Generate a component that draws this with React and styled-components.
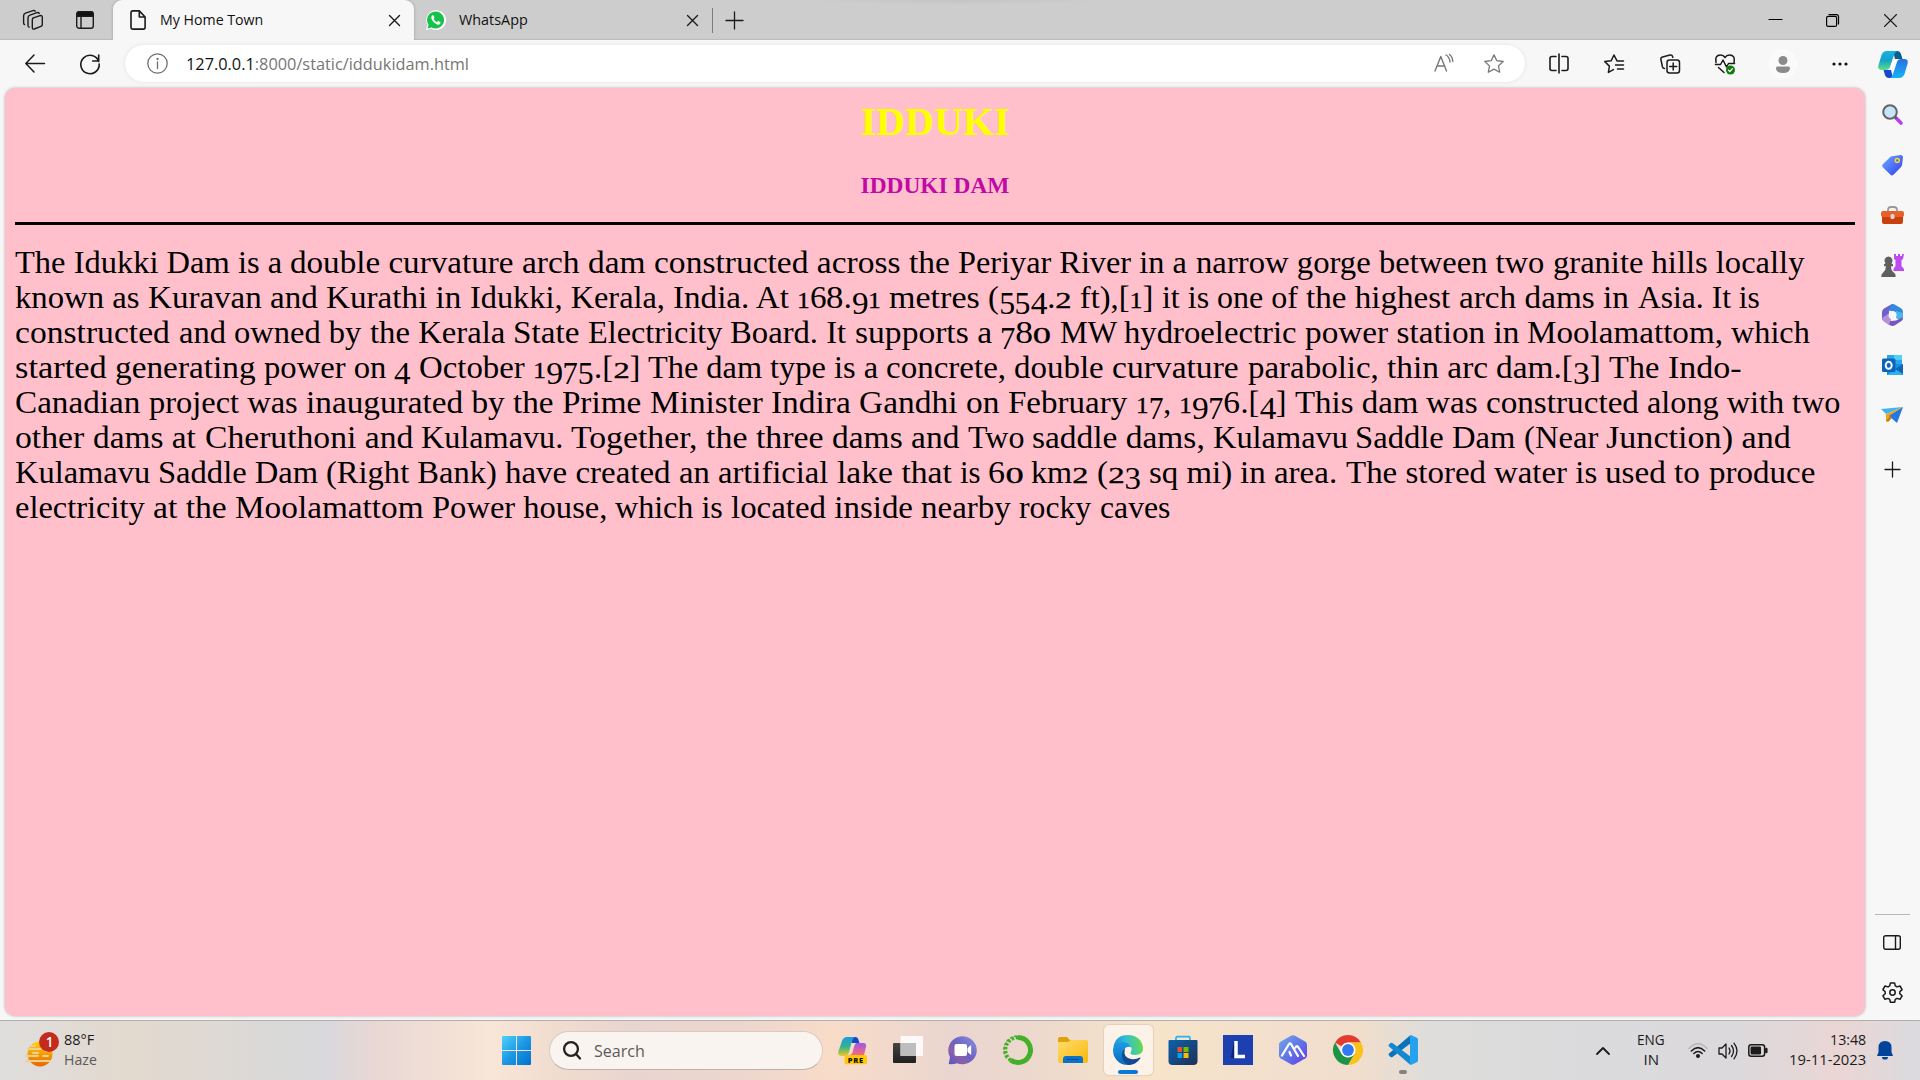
import React, { useLayoutEffect, useRef, useState } from 'react';
import styled, { createGlobalStyle, css } from 'styled-components';

const Global = createGlobalStyle`
  html, body { margin: 0; padding: 0; overflow: hidden; background: #f7f7f7; }
  * { box-sizing: border-box; }
  svg { display: block; flex: none; overflow: visible; }
`;

const ui = `"Open Sans", "Noto Sans", sans-serif`;
const serif = `"Liberation Serif", serif`;

/* ---------- text that spans an exact width ---------- */
const FitBox = styled.span`
  display: inline-block;
  flex: none;
  width: ${(p) => p.$w}px;
  white-space: pre;
`;
const FitInner = styled.span`
  display: inline-block;
  transform-origin: 0 50%;
`;
function Fit({ w, children }) {
  const ref = useRef(null);
  const [k, setK] = useState(1);
  useLayoutEffect(() => {
    setK(w / ref.current.offsetWidth);
  }, [w]);
  return (
    <FitBox $w={w}>
      <FitInner ref={ref} style={{ transform: `scaleX(${k})` }}>{children}</FitInner>
    </FitBox>
  );
}

/* ---------- window frame ---------- */
const Screen = styled.div`
  width: 1920px;
  height: 1080px;
  display: flex;
  flex-direction: column;
  overflow: hidden;
  background: #f7f7f7;
  font-family: ${ui};
  color: #111;
`;
const TabStrip = styled.div`
  height: 40px;
  flex: none;
  display: flex;
  background: radial-gradient(ellipse 150px 5px at 958px 0, #c4c4c4, #cdcdcd 100%);
  box-shadow: inset 0 -1px 0 #bcbcbc;
`;
const Slot = styled.div`
  width: ${(p) => p.$w}px;
  height: 100%;
  flex: none;
  display: flex;
  align-items: center;
  justify-content: center;
`;
const Tab = styled.div`
  height: 40px;
  display: flex;
  align-items: center;
  font-size: 15px;
  line-height: 20px;
  ${(p) => p.$active ? css`
    width: 301px;
    padding: 0 14px 0 17px;
    background: #f7f7f7;
    border-radius: 9px 9px 0 0;
    box-shadow: 0 0 3px rgba(0, 0, 0, .25);
    clip-path: inset(0 -4px 0 -4px);
  ` : css`
    width: 298px;
    padding: 0 14px 0 12px;
  `}
`;
const TabTitle = styled.div`
  flex: 1;
  padding: 0 0 3px ${(p) => p.$pad}px;
`;
const Divider = styled.div`
  width: 1px;
  height: 25px;
  margin-top: 8px;
  background: #7c7c7c;
`;
const Spacer = styled.div`flex: 1;`;
const Toolbar = styled.div`
  height: 48px;
  flex: none;
  display: flex;
  align-items: center;
  padding-left: 8px;
`;
const AddressBar = styled.div`
  width: 1400px;
  height: 37px;
  flex: none;
  margin: 0 6px 1px 8px;
  padding: 0 21px 0 22px;
  display: flex;
  align-items: center;
  border-radius: 19px;
  background: #fff;
  box-shadow: 0 0 4px rgba(0, 0, 0, .09);
`;
const Url = styled.div`
  display: flex;
  flex: 1;
  padding-left: 18px;
  font-size: 17px;
  line-height: 24px;
  color: #767676;
`;
const Host = styled.span`color: #111;`;
const Avatar = styled.div`
  width: 28px;
  height: 28px;
  border-radius: 50%;
  background: #fafafa;
  border: 1px solid #fff;
  display: flex;
  align-items: center;
  justify-content: center;
`;
const Middle = styled.div`
  height: 932px;
  flex: none;
  display: flex;
  padding-left: 5px;
`;

/* ---------- page ---------- */
const Page = styled.main`
  width: 1860px;
  height: 928px;
  flex: none;
  padding: 11px 10px 10px;
  border-radius: 10px;
  background: #ffc0cb;
  box-shadow: 0 0 3px rgba(0, 0, 0, .3);
  font-family: ${serif};
`;
const Title = styled.h1`
  margin: 0 0 27px;
  font-size: 40px;
  line-height: 46px;
  text-align: center;
  color: #ff0;
`;
const Subtitle = styled.h3`
  margin: 0 0 23px;
  font-size: 23.4px;
  line-height: 27px;
  text-align: center;
  color: #c109a5;
`;
const Rule = styled.hr`
  margin: 0;
  border: 0;
  height: 3px;
  background: #000;
`;
const Article = styled.div`
  margin-top: 20px;
  font-size: 32px;
  line-height: 35px;
  color: #000;
`;
const Line = styled.div`
  height: 35px;
  display: flex;
`;
const Digit = styled.span`
  display: inline-block;
  line-height: 1;
  height: 1em;
  width: ${(p) => p.$natural}px;
  margin-right: ${(p) => p.$w - p.$natural}px;
  transform: scaleX(${(p) => p.$w / p.$natural});
  transform-origin: 0 100%;
  ${(p) => p.$small && css`font-size: 22.5px; -webkit-text-stroke: .3px #000;`}
  ${(p) => p.$low && css`position: relative; top: 6px;`}
`;

const digitWidth = { 0: 17.8, 1: 12.8, 2: 16, 3: 16, 4: 16.4, 5: 15.6, 6: 16.6, 7: 15, 8: 17.4, 9: 16.6 };
const oldStyle = (text) =>
  text.split(/(\d)/).map((t, i) => {
    if (!/^\d$/.test(t)) return t;
    const small = '012'.includes(t);
    return <Digit key={i} $w={digitWidth[t]} $natural={small ? 11.25 : 16} $small={small} $low={'34579'.includes(t)}>{t}</Digit>;
  });

/* each line: right edge, then phrases with the x at which they begin */
const lines = [
  [1804, [15, 'The Idukki Dam is a '], [290.2, 'double curvature '], [522, 'arch dam '], [653.8, 'constructed across the '], [958.5, 'Periyar River in a '], [1195.7, 'narrow gorge '], [1378.7, 'between two '], [1552.6, 'granite hills locally']],
  [1760, [15, 'known as '], [148, 'Kuravan and '], [325.7, 'Kurathi in '], [469.6, 'Idukki, Kerala, '], [672.8, 'India. At '], [797, '168.91 '], [889, 'metres '], [988, '(554.2 ft),[1] '], [1162, 'it is one of '], [1306, 'the highest '], [1459, 'arch dams in '], [1637.7, 'Asia. It is']],
  [1810, [15, 'constructed '], [178.8, 'and owned by '], [369.8, 'the Kerala '], [513, 'State '], [587.7, 'Electricity '], [730, 'Board. It '], [854.6, 'supports a '], [1000.4, '780 '], [1059.8, 'MW '], [1124, 'hydroelectric '], [1305, 'power station in '], [1527.5, 'Moolamattom, '], [1731.4, 'which']],
  [1741, [15, 'started '], [115, 'generating '], [263.9, 'power on '], [394.5, '4 '], [418.7, 'October '], [532.6, '1975.[2] '], [647.7, 'The dam '], [770, 'type is a '], [886.5, 'concrete, '], [1014.5, 'double '], [1112.4, 'curvature '], [1247.7, 'parabolic, '], [1386.7, 'thin arc '], [1496.3, 'dam.[3] '], [1609, 'The '], [1667.7, 'Indo-']],
  [1841, [15, 'Canadian '], [148.8, 'project was '], [306, 'inaugurated by '], [513, 'the Prime '], [650, 'Minister '], [770.8, 'Indira Gandhi '], [966, 'on '], [1007.8, 'February '], [1135.7, '17, '], [1179, '1976.[4] '], [1294.9, 'This dam '], [1426.5, 'was constructed '], [1647.5, 'along with two']],
  [1791, [15, 'other '], [93, 'dams at '], [204.5, 'Cheruthoni and '], [421, 'Kulamavu. '], [571, 'Together, '], [705.9, 'the three '], [832, 'dams and '], [968, 'Two '], [1032, 'saddle dams, '], [1212.8, 'Kulamavu '], [1355.5, 'Saddle Dam '], [1523.8, '(Near '], [1606.5, 'Junction) and']],
  [1815, [15, 'Kulamavu '], [158, 'Saddle Dam '], [326, '(Right Bank) '], [505, 'have created '], [679, 'an artificial '], [837, 'lake that '], [960, 'is '], [988, '60 '], [1031, 'km2 '], [1096.5, '(23 '], [1149, 'sq mi) '], [1240.4, 'in area. '], [1345.7, 'The stored '], [1494, 'water is '], [1605, 'used to '], [1708.7, 'produce']],
  [1170, [15, 'electricity '], [153, 'at the '], [235, 'Moolamattom '], [431.6, 'Power house, '], [614.7, 'which is '], [731, 'located inside '], [921.4, 'nearby '], [1019.4, 'rocky '], [1099.6, 'caves']],
];

/* ---------- side bar ---------- */
const Sidebar = styled.aside`
  width: 55px;
  display: flex;
  flex-direction: column;
  align-items: center;
  padding: 0 1px 3px 0;
`;
const SideItem = styled.div`
  width: 54px;
  height: ${(p) => p.$h || 50}px;
  flex: none;
  display: flex;
  align-items: center;
  justify-content: center;
`;
const SideRule = styled.div`
  width: 35px;
  height: 1px;
  background: #b8b8b8;
  margin-bottom: 2px;
`;

/* ---------- task bar ---------- */
const Taskbar = styled.footer`
  height: 60px;
  flex: none;
  display: flex;
  align-items: stretch;
  border-top: 1px solid #b3aeae;
  background: linear-gradient(90deg, #dfdedd 0, #e3d9ce 130px, #d9d9d9 290px, #d9d8dc 325px, #e9d7d5 375px,
    #f8e6d7 490px, #f0dccf 560px, #e9d5d0 630px, #ecd6ce 740px, #f8dcc8 830px, #ead6d0 950px, #ecd8cd 1030px,
    #f7e4ca 1150px, #f2dfcd 1280px, #f1decc 1360px, #dedddb 1430px, #dadadd 1600px, #dcd9dc 1740px, #ead6d4 1840px, #dcdade 1915px);
`;
const Weather = styled.div`
  width: 489px;
  display: flex;
  align-items: center;
  padding: 0 0 1px 23px;
`;
const Stack = styled.div`
  width: ${(p) => p.$w}px;
  display: flex;
  flex-direction: column;
  align-items: ${(p) => p.$align};
  justify-content: center;
  margin-left: ${(p) => p.$ml || 0}px;
  padding-bottom: 3px;
  font-size: 15px;
  line-height: 20px;
  color: #1b1b1b;
`;
const Dim = styled.span`color: #5a5a5a;`;
const SearchBox = styled.div`
  width: 274px;
  height: 39px;
  flex: none;
  margin: 10px 3px 0 5px;
  padding: 0 13px 1px;
  display: flex;
  align-items: center;
  gap: 13px;
  border-radius: 20px;
  background: #faf4f1;
  border: 1px solid #dcc9c3;
  border-bottom-color: #c0b0ac;
  font-size: 17px;
  color: #5c5a5a;
`;
const AppSlot = styled.div`
  width: 54.95px;
  height: 100%;
  flex: none;
  display: flex;
  flex-direction: column;
  align-items: center;
  padding-top: 4px;
`;
const AppTile = styled.div`
  width: 49px;
  height: 50px;
  display: flex;
  flex-direction: column;
  align-items: center;
  padding-top: 10px;
  border-radius: 5px;
  ${(p) => p.$active && css`background: #fcf2e7; box-shadow: 0 0 1px 1px rgba(190, 165, 145, .3);`}
`;
const Indicator = styled.div`
  width: ${(p) => p.$w}px;
  height: 4px;
  margin-top: 5px;
  flex: none;
  border-radius: 2px;
  background: ${(p) => p.$c};
`;
const Tray = styled.div`
  display: flex;
  flex: 1;
  justify-content: flex-end;
  padding-right: 27px;
`;

/* ---------- line icons ---------- */
const Svg = ({ w = 20, h = 20, c = '#1b1b1b', s = 1.3, children }) => (
  <svg width={w} height={h} viewBox={`0 0 ${w} ${h}`} fill="none" stroke={c} strokeWidth={s} strokeLinecap="round" strokeLinejoin="round">{children}</svg>
);
const Workspaces = () => (
  <Svg w={22} h={20} s={1.4}>
    <path d="M10.7 8.2 18 5.7q2.3-.6 2.3 1.5v7.2q0 1.5-1.4 2L12.3 19q-2 .6-2-1.4V9.8q0-1.2 1.2-1.6Z" />
    <path d="M17.2 3.4q-.6-1.2-2.3-.7L8 5.200Q6 6 6 8v7.500q0 1.400 1.300 1.600" />
    <path d="M13.200 1.200q-.7-1-2.200-.5L3.500 3.200Q1.600 4 1.600 6v7q0 1.200 1 1.600" />
  </Svg>
);
const TabActions = () => (
  <Svg w={18} h={18} s={1.4}>
    <rect x=".7" y=".7" width="16.600" height="16.600" rx="2.600" />
    <path d="M1 3q0-2.300 2.300-2.300h11.400Q17 .7 17 3v2.300H1Z" fill="#111" /><path d="M5 5v12" />
  </Svg>
);
const FileIcon = () => (
  <Svg w={16} h={20} s={1.6}><path d="M2.800.9h6.500L15.100 7v10.300q0 1.800-1.800 1.800H2.800Q1 19.100 1 17.300V2.700Q1 .9 2.800.9ZM9.300 1.200V7H15" /></Svg>
);
const Cross = ({ n = 11, s = 1.4 }) => <Svg w={n} h={n} s={s}><path d={`M.5.5 ${n - .5} ${n - .5}M${n - .5}.5.5 ${n - .5}`} /></Svg>;
const Plus = ({ n = 17 }) => <Svg w={n} h={n} s={1.3}><path d={`M${n / 2} 0V${n}M0 ${n / 2}H${n}`} /></Svg>;
const WhatsApp = () => (
  <svg width="20" height="20" viewBox="0 0 20 20">
    <path d="M0 20l1.500-5.200A9.900 9.900 0 1 1 5.300 18.700Z" fill="#fff" />
    <path d="M1.500 18.500l1-3.800a8.500 8.500 0 1 1 3.100 2.800Z" fill="#16c24a" />
    <path d="M7 5.200q-.7-.2-1.200.5-1.300 1.800.2 4.300 2.300 3.800 5.800 4.700 2.200.3 2.800-1.900.1-.6-.4-.9l-1.700-.8q-.5-.2-.8.2l-.8.9Q8.700 11.400 7.600 9l.7-.9q.3-.4.1-.8L7.700 5.600Q7.500 5.300 7 5.200Z" fill="#fff" />
  </svg>
);
const Back = () => <Svg s={1.5}><path d="M19.500 9.500H1M9 1 .8 9.500 9 18" /></Svg>;
const Refresh = () => <Svg s={1.6}><path d="M18.700 7.500A9.200 9.200 0 1 0 19.200 10M18.700 1v6h-6" /></Svg>;
const Info = () => <Svg w={21} h={21} c="#6f6f6f"><circle cx="10.500" cy="10.500" r="9.700" /><path d="M10.500 9v6.500" /><circle cx="10.500" cy="6" r=".5" fill="#6f6f6f" /></Svg>;
const ReadAloud = () => <Svg c="#777" s={1.4}><path d="M1 17 6.800 2.500 12.500 17M3 12h7.800M12 1q3.500 2 4 7M15.500.5q3.200 2.500 3.300 7" /></Svg>;
const starPath = 'M10 .9l2.800 5.800 6.400.8-4.700 4.400 1.200 6.300L10 15.100l-5.700 3.100 1.200-6.300L.8 7.500l6.400-.8Z';
const Star = () => <Svg c="#777"><path d={starPath} /></Svg>;
const Split = () => <Svg s={1.6}><path d="M7 2.500H3Q1 2.500 1 4.500v10q0 2 2 2h4M13 2.500h4q2 0 2 2v10q0 2-2 2h-4M10 0v19" /></Svg>;
const Favorites = () => <Svg s={1.5}><path d="M13 6.900 10 1 7.100 6.800.8 7.600l4.600 4.500-1 6.300 5-2.800M13.500 7h6M11.500 11h8M13.500 15h6" /></Svg>;
const Collections = () => (
  <Svg s={1.5}>
    <rect x="7" y="6" width="12.500" height="13" rx="2.500" /><path d="M13.200 9v7M9.700 12.500h7" />
    <path d="M4.500 14.500q-1.500 0-2-1.500L.9 5.500Q.5 3.500 2.500 3l7.500-2q2-.5 2.600 1.400l.3 1" />
  </Svg>
);
const Health = () => (
  <Svg w={20} h={20} s={1.5}>
    <path d="M1 8.500Q-.5 1 5.500 1 8.500 1 10 3.500 11.500 1 14.500 1q6 0 4.600 7.500M.5 10.500h5L8 6l3.500 7 2-3.500h6M3.500 13.500l5.500 5" />
    <circle cx="15.500" cy="16" r="4.500" fill="#107c10" stroke="none" /><path d="m13.500 16.200 1.400 1.300 2.600-2.800" stroke="#fff" strokeWidth="1.200" />
  </Svg>
);
const Person = () => <svg width="14" height="17" viewBox="0 0 14 17" fill="#8b8b8b"><circle cx="7" cy="4.500" r="4.500" /><path d="M0 12q0-1.500 1.500-1.500h11Q14 10.500 14 12q0 5-7 5t-7-5Z" /></svg>;
const Dots = () => <svg width="16" height="4" fill="#111"><circle cx="2" cy="2" r="1.600" /><circle cx="8" cy="2" r="1.600" /><circle cx="14" cy="2" r="1.600" /></svg>;
const Copilot = () => (
  <svg width="30" height="27" viewBox="0 0 30 27">
    <defs>
      <linearGradient id="ca" x1="0" y1="0" x2="0" y2="1"><stop stopColor="#17b0e8" /><stop offset=".5" stopColor="#15a3c6" /><stop offset="1" stopColor="#5ee08c" /></linearGradient>
      <linearGradient id="cb" x1="0" y1="0" x2="0" y2="1"><stop stopColor="#2a6fdc" /><stop offset="1" stopColor="#13b4fb" /></linearGradient>
    </defs>
    <path d="M15 0h4q3 0 4 3l1.500 5H17Z" fill="#0b5f8f" />
    <path d="M15 27h-4q-3 0-4-3l-1.500-5H13Z" fill="#1746cf" />
    <path d="M9 0h10q-2 1-3 4l-4 12q-1 3-4 3H4Q-1 19 .5 14L3.500 4Q5 0 9 0Z" fill="url(#ca)" />
    <path d="M21 27H12q2-1 3-4l4-12q1-3 4-3h3q5 0 3.500 5L26.500 23Q25 27 21 27Z" fill="url(#cb)" />
    <path d="M15 8h5q-2 1-3 4l-2 5q-1 2-4 2 1-1 1.500-3Z" fill="#fff" />
  </svg>
);
const Minimize = () => <Svg w={13} h={2} c="#000" s={1.2}><path d="M0 .5h13" /></Svg>;
const Restore = () => <Svg w={13} h={13} c="#000" s={1.2}><rect x=".6" y="2.400" width="10" height="10" rx="1.500" /><path d="M3 .6h7.500q2 0 2 2V10" /></Svg>;

/* ---------- side bar icons ---------- */
const Magnifier = () => (
  <svg width="21" height="21" viewBox="0 0 21 21"><path d="m14 14 5 5" stroke="#b83df2" strokeWidth="3.600" strokeLinecap="round" /><path d="m12 12 2.500 2.500" stroke="#555" strokeWidth="2" /><circle cx="8" cy="8" r="6.800" fill="#c5e4fa" stroke="#646464" strokeWidth="2" /></svg>
);
const Tag = () => (
  <svg width="21" height="21" viewBox="0 0 21 21">
    <defs><linearGradient id="tg" x1="0" y1="0" x2="1" y2="1"><stop stopColor="#6fb1ff" /><stop offset="1" stopColor="#3138f0" /></linearGradient></defs>
    <path d="M10 1.200 18.500 0Q21 0 21 2.500L20 10q-.2 1-1 2l-7.500 7.800q-1.700 1.500-3 0L.8 12.300q-1.400-1.500 0-3L8 2.200q.8-.8 2-1Z" fill="url(#tg)" /><circle cx="15.300" cy="5.500" r="2" fill="#5b66e8" stroke="#ffd43a" strokeWidth="1.500" />
  </svg>
);
const Toolbox = () => (
  <svg width="23" height="18" viewBox="0 0 23 18">
    <path d="M7 6V4q0-3 3-3h3q3 0 3 3v2" fill="none" stroke="#999" strokeWidth="1.800" /><path d="M1 8h21v8q0 2-2 2H3q-2 0-2-2Z" fill="#c9400f" /><path d="M2 5h19q2 0 2 2v2q0 2-2 2H2q-2 0-2-2V7q0-2 2-2Z" fill="#e8602a" /><rect x="9.500" y="8" width="4" height="5" rx="1.500" fill="#d9d5d2" />
  </svg>
);
const Chess = () => (
  <svg width="23" height="23" viewBox="0 0 23 23">
    <path d="M13 0h2v2h2V0h2v2h2V0h2l-1 5-1.500 1v6l2.500 3v2H12.500v-2l2-3V6L13 5Z" fill="#bd4bf0" />
    <path d="M7.500 2.500a4.200 4.200 0 0 1 3 7l1.500.8v2h-2q0 4 3 6.500 2 1 1.600 4.200H.3Q0 20 2 18.800 5 16 5 12.300H3v-2l1.500-.8a4.200 4.200 0 0 1 3-7Z" fill="#5f5f5f" />
  </svg>
);
const M365 = () => (
  <svg width="21" height="22" viewBox="0 0 21 22">
    <path d="M10 0 2 4.500Q0 6 0 8v7l7-3V7l6-4Z" fill="#6c62c9" /><path d="M9 .7q2-1.200 4 0l6 3.600q2 1.200 2 3.700v6l-7-4-7-4Z" fill="#3587e0" /><path d="m14 7 7 2v5q0 2-2 3l-5-3Z" fill="#4bb7e8" />
    <path d="M0 13v1q0 2 2 3.200l6 4q2.500 1.500 5 0l6-4q2-1.500 2-4l-7 3.300-5 .5-6-5Z" fill="#7556c1" /><path d="m0 14 6-4 3 5-2 6-5-3.500Q0 16 0 14Z" fill="#b392d9" /><circle cx="10.500" cy="11" r="4" fill="#f7f7f7" />
  </svg>
);
const Outlook = () => (
  <svg width="21" height="20" viewBox="0 0 21 20">
    <path d="M5 0h15v10H5Z" fill="#28a8ea" /><path d="M12 0h8v5h-8Z" fill="#50d0f8" /><path d="M5 9h16v11H5Z" fill="#1490df" /><path d="m5 20 16-11v9q0 2-2 2Z" fill="#28b2f0" /><path d="m13 14 8-5v10Z" fill="#1066b5" /><rect y="3.500" width="13.500" height="13.500" rx="1.500" fill="#0a64bd" /><ellipse cx="6.700" cy="10.300" rx="3" ry="3.500" fill="none" stroke="#fff" strokeWidth="1.900" />
  </svg>
);
const Send = () => <svg width="22" height="16" viewBox="0 0 22 16"><path d="M0 2 22 0 5 7Z" fill="#41b3f4" /><path d="M22 0 5 7v8l3-4Z" fill="#f0a51d" /><path d="M22 0 8 9l8 7Z" fill="#2478e4" /><path d="m5 14 4-5 2 2-4 4Z" fill="#c77f11" /></svg>;
const Panel = () => <Svg w={18} h={15} s={1.4}><rect x=".7" y=".7" width="16.600" height="13.600" rx="2" /><path d="M12.500 1v13" /></Svg>;
const Gear = () => <Svg w={21} h={21} s={1.5}><circle cx="10.500" cy="10.500" r="2.700" /><path d="M8.400.9h4.200l.7 3 1.700 1 3-.9 2.100 3.600-2.300 2.100v2l2.300 2.100L18 17.300l-3-.9-1.700 1-.7 2.900H8.400l-.7-2.900-1.700-1-3 .9-2.100-3.500 2.300-2.100v-2L.9 7.600 3 4l3 .9 1.700-1Z" /></Svg>;

/* ---------- task bar icons ---------- */
const Haze = () => (
  <svg width="36" height="36" viewBox="0 0 36 36">
    <defs><linearGradient id="hz" x1="0" y1="0" x2="0" y2="1"><stop stopColor="#ffd20a" /><stop offset="1" stopColor="#ea6500" /></linearGradient></defs>
    <circle cx="17" cy="22" r="12.500" fill="url(#hz)" />
    <path d="M5 17h13M22 19h5M3 24h12M20 24h5M3 29h24M7 14h5M15 21h-5" stroke="#ecd090" strokeWidth="2" strokeLinecap="round" />
    <circle cx="26" cy="10" r="10" fill="#c42b1c" />
    <text x="26.500" y="15" textAnchor="middle" fill="#fff" fontFamily="Open Sans" fontSize="13.500" fontWeight="600">1</text>
  </svg>
);
const Windows = () => (
  <svg width="29" height="29" viewBox="0 0 29 29">
    <defs><linearGradient id="wn" x1="0" y1="0" x2="29" y2="29" gradientUnits="userSpaceOnUse"><stop stopColor="#50d2fc" /><stop offset=".5" stopColor="#1c98e4" /><stop offset="1" stopColor="#0070cf" /></linearGradient></defs>
    <path d="M1 0h13v14H0V1Q0 0 1 0ZM15 0h13q1 0 1 1v13H15ZM0 15h14v14H1q-1 0-1-1ZM15 15h14v13q0 1-1 1H15Z" fill="url(#wn)" />
  </svg>
);
const SearchGlass = () => <Svg w={18} h={19} s={2.300} c="#222"><circle cx="8" cy="8" r="6.900" /><path d="m13 13 4 4.500" /></Svg>;
const CopilotPre = () => (
  <svg width="30" height="30" viewBox="0 0 30 30">
    <defs><linearGradient id="pa" x1="0" y1="0" x2="0" y2="1"><stop stopColor="#1b9be8" /><stop offset=".5" stopColor="#2fb48e" /><stop offset="1" stopColor="#f0c52a" /></linearGradient>
      <linearGradient id="pb" x1="0" y1="0" x2="0" y2="1"><stop stopColor="#9a58ee" /><stop offset="1" stopColor="#fb6a72" /></linearGradient></defs>
    <path d="M13 2h4q3 0 3.500 3l1 3h-8Z" fill="#1747c4" />
    <path d="M9 2h8q-2 1-3 4l-3 11q-1 4-4 4H4q-5 0-3.500-5L4 6q1.500-4 5-4Z" fill="url(#pa)" />
    <path d="M18 8h7q4 0 3 4l-2 8H11q2-1 3-4l2-6q.5-2 2-2Z" fill="url(#pb)" /><path d="M14 8h4q-2 2-3 8-1 4-4 4 1-3 3-12Z" fill="#f8dccb" />
    <rect x="6.500" y="20" width="22.500" height="9.300" rx="2" fill="#ffc80a" /><text x="17.800" y="27.500" textAnchor="middle" fontFamily="Open Sans" fontWeight="800" fontSize="7.600" letterSpacing=".6" fill="#111">PRE</text>
  </svg>
);
const TaskView = () => (
  <svg width="30" height="30" viewBox="0 0 30 30"><defs><linearGradient id="tv" x1="0" y1="0" x2="0" y2="1"><stop stopColor="#444" /><stop offset="1" stopColor="#202020" /></linearGradient></defs>
    <rect y="8" width="23" height="20" rx="1" fill="url(#tv)" /><rect x="7.500" y="1" width="22.500" height="20" rx="1" fill="#fff" opacity=".85" /><path d="M7.500 8H23v13H7.500Z" fill="#bdbdbd" /></svg>
);
const Chat = () => (
  <svg width="30" height="30" viewBox="0 0 30 30"><defs><linearGradient id="ch" x1="1" y1="0" x2="0" y2="1"><stop stopColor="#8b90e0" /><stop offset=".5" stopColor="#6c62c0" /><stop offset=".7" stopColor="#8d5fa8" /><stop offset="1" stopColor="#5058cc" /></linearGradient></defs>
    <path d="M.7 29 2 22A14.300 14 0 1 1 9 28.200Q5 29.500.7 29Z" fill="url(#ch)" /><rect x="6.500" y="9" width="12.500" height="12" rx="2" fill="#fff" /><path d="m19.500 13 3.700-3v10l-3.700-3Z" fill="#fff" /></svg>
);
const Anaconda = () => (
  <svg width="30" height="30" viewBox="0 0 30 30" fill="none" stroke="#43b02a"><path d="M15 2.500A12.500 12.500 0 1 1 7.500 25" strokeWidth="5" /><path d="M15 2.500A12.500 12.500 0 0 0 7.500 25" strokeWidth="3.500" strokeDasharray="2.500 1.600" /><path d="M14 1A14 14 0 0 0 4 24" strokeWidth="1.300" strokeDasharray="3 1.500" /></svg>
);
const Folder = () => (
  <svg width="30" height="30" viewBox="0 0 30 30"><defs><linearGradient id="fo" x1="0" y1="0" x2="1" y2="1"><stop stopColor="#ffdc6a" /><stop offset="1" stopColor="#f9b80b" /></linearGradient></defs>
    <path d="M0 4q0-2 2-2h7l3 3h8v10H0Z" fill="#e0a00c" /><path d="M0 7h10l3-2h15q2 0 2 2v19q0 2-2 2H2q-2 0-2-2Z" fill="url(#fo)" /><path d="M5 28v-4q0-3 3-3h14q3 0 3 3v4Z" fill="#0c72c8" /><path d="M9 24.500h12" stroke="#074b8f" /></svg>
);
const Edge = () => (
  <svg width="30" height="30" viewBox="0 0 30 30"><defs>
    <linearGradient id="ea" x1="0" y1=".5" x2="1" y2=".4"><stop stopColor="#1b8fe0" /><stop offset=".45" stopColor="#32bfd5" /><stop offset="1" stopColor="#66dd46" /></linearGradient>
    <linearGradient id="eb" x1="0" y1="0" x2="0" y2="1"><stop stopColor="#1c9de4" /><stop offset="1" stopColor="#0b67c0" /></linearGradient></defs>
    <path d="M.3 13Q2 0 15 0q13 .5 15 12.500.5 7.500-8 7.500-6-.3-4.200-3Q20 13 16 10 9 5.500.3 13Z" fill="url(#ea)" />
    <path d="M0 14Q3 7 10 7q6 .5 8 5-5-1.500-7 3-2.500 8 4 13l3 1.800Q6 31.500 1 21 0 18 0 14Z" fill="url(#eb)" />
    <path d="M12 14q-2.500 8 6 10 5 .8 9-1.600.8.200.3 1Q23 29.500 16 29.900 8.500 27 9 19q.5-4 3-5Z" fill="#114a93" />
  </svg>
);
const Store = () => (
  <svg width="30" height="30" viewBox="0 0 30 30"><defs><linearGradient id="st" x1="0" y1="0" x2="1" y2="1"><stop stopColor="#0b62b0" /><stop offset="1" stopColor="#1d3054" /></linearGradient></defs>
    <path d="M8 6V3q0-1.300 1.300-1.300h11.400Q22 1.700 22 3v3" fill="none" stroke="#2bb2ed" strokeWidth="1.700" /><path d="M.5 6q0-1 1-1h27q1 0 1 1v20q0 4-4 4h-21q-4 0-4-4Z" fill="url(#st)" />
    <path d="M9.500 12H14v5H9.500Z" fill="#f25022" /><path d="M15.500 12h5v5h-5Z" fill="#7fba00" /><path d="M9.500 18H14v5H9.500Z" fill="#00a4ef" /><path d="M15.500 18h5v5h-5Z" fill="#ffb900" /></svg>
);
const LApp = () => (
  <svg width="30" height="30" viewBox="0 0 30 30"><path d="M0 0h30v30H0Z" fill="#1d3fb0" /><path d="M11 6 8 22v1h6Z" fill="#0b2470" /><path d="M13 6v15.500h9" fill="none" stroke="#fff" strokeWidth="3.500" /></svg>
);
const HexApp = () => (
  <svg width="30" height="30" viewBox="0 0 30 30"><defs><linearGradient id="hx" x1="0" y1="0" x2="1" y2="1"><stop stopColor="#75a5ea" /><stop offset=".5" stopColor="#6077e6" /><stop offset="1" stopColor="#6537e9" /></linearGradient></defs>
    <path d="M13 .8q2-1 4 0l10.500 6Q29 8 29 9.500v11q0 1.700-1.500 2.700l-10.500 6q-2 1-4 0l-10.500-6Q1 22.200 1 20.500v-11Q1 8 2.500 6.800Z" fill="url(#hx)" /><path d="m4 20.500 7-11.500q1-1.500 2 0L20 21M11.500 17l1.500 3.500M17.500 12.500q1.500-3 3 0L26 21" fill="none" stroke="#fff" strokeWidth="2.200" strokeLinejoin="round" strokeLinecap="round" /></svg>
);
const Chrome = () => (
  <svg width="30" height="30" viewBox="0 0 30 30"><path d="M15 15 2 7.500A15 15 0 0 1 28 7.500H15Z" fill="#e33b2e" /><path d="M28 7.500A15 15 0 0 1 15 30l6.500-11.200L15 7.500Z" fill="#fcc21b" /><path d="M2 7.500A15 15 0 0 0 15 30l6.500-11.200H8.500Z" fill="#1f9345" /><circle cx="15" cy="15" r="7.500" fill="#fff" /><circle cx="15" cy="15" r="5.900" fill="#3079ee" /></svg>
);
const VSCode = () => (
  <svg width="30" height="30" viewBox="0 0 30 30"><path d="M22 .5 1 18.500q-1 1 0 2l1.500 1.400q1 .8 2 0L22 8.800Z" fill="#0874bc" /><path d="M22 29.500 1 11.500q-1-1 0-2l1.500-1.400q1-.8 2 0L22 21.200Z" fill="#1188d0" /><path d="M22 .5q1-.8 2 0l4.800 2.200Q30 3.200 30 4.500v21q0 1.300-1.200 1.800L24 29.500q-1 .8-2 0Z" fill="#25a1ee" /></svg>
);
const Chevron = () => <Svg w={14} h={8} s={1.800}><path d="M1 7 7 1l6 6" /></Svg>;
const Wifi = () => (
  <svg width="20" height="15" viewBox="0 0 20 15" fill="none" strokeWidth="1.500" strokeLinecap="round"><path d="M1 5.500Q10-4 19 5.500" stroke="#b9b6b8" /><path d="M3.300 8Q10 1.300 16.700 8M5.800 10.500Q10 6.500 14.200 10.500" stroke="#1b1b1b" /><circle cx="10" cy="13" r="2" fill="#1b1b1b" /></svg>
);
const Volume = () => <Svg w={20} h={18} s={1.300}><path d="M1 6h3l4-4v14l-4-4H1ZM11 6q2 3 0 6M13.500 3.500q4 5.500 0 11M16 1.200q6 7.800 0 15.600" /></Svg>;
const Battery = () => <Svg w={20} h={13} s={1.500}><rect x=".8" y=".8" width="15.800" height="11.400" rx="2.500" /><rect x="3.300" y="3.300" width="9" height="6.400" rx=".5" fill="#1b1b1b" /><path d="M18.300 5v3" strokeWidth="2.500" /></Svg>;
const Bell = () => <svg width="16" height="19" viewBox="0 0 16 19" fill="#03439a"><path d="M8 0q6.500 0 6.500 6.500V11l1.500 4H0l1.500-4V6.500Q1.500 0 8 0ZM5 16h6q0 2.600-3 2.600T5 16Z" /></svg>;

const apps = [
  { Icon: CopilotPre }, { Icon: TaskView }, { Icon: Chat }, { Icon: Anaconda }, { Icon: Folder },
  { Icon: Edge, active: true }, { Icon: Store }, { Icon: LApp }, { Icon: HexApp }, { Icon: Chrome }, { Icon: VSCode, open: true },
];

export default function App() {
  return (
    <Screen>
      <Global />
      <TabStrip>
        <Slot $w={65}><Workspaces /></Slot>
        <Slot $w={40}><TabActions /></Slot>
        <Slot $w={8} />
        <Tab $active>
          <FileIcon />
          <TabTitle $pad={14}><Fit w={103}>My Home Town</Fit></TabTitle>
          <Cross />
        </Tab>
        <Tab>
          <WhatsApp />
          <TabTitle $pad={13}><Fit w={69}>WhatsApp</Fit></TabTitle>
          <Cross />
        </Tab>
        <Divider />
        <Slot $w={43}><Plus /></Slot>
        <Spacer />
        <Slot $w={57}><Minimize /></Slot>
        <Slot $w={57}><Restore /></Slot>
        <Slot $w={59}><Cross n={13} s={1.1} /></Slot>
      </TabStrip>
      <Toolbar>
        <Slot $w={54}><Back /></Slot>
        <Slot $w={55}><Refresh /></Slot>
        <AddressBar>
          <Info />
          <Url><Fit w={283}><Host>127.0.0.1</Host>:8000/static/iddukidam.html</Fit></Url>
          <ReadAloud />
          <Slot $w={30} />
          <Star />
        </AddressBar>
        <Slot $w={55}><Split /></Slot>
        <Slot $w={56}><Favorites /></Slot>
        <Slot $w={55}><Collections /></Slot>
        <Slot $w={56}><Health /></Slot>
        <Slot $w={60}><Avatar><Person /></Avatar></Slot>
        <Slot $w={54}><Dots /></Slot>
        <Slot $w={52}><Copilot /></Slot>
      </Toolbar>
      <Middle>
        <Page>
          <Title>IDDUKI</Title>
          <Subtitle>IDDUKI DAM</Subtitle>
          <Rule />
          <Article>
            {lines.map(([end, ...parts], n) => (
              <Line key={n}>
                {parts.map(([x, text], i) => (
                  <Fit key={x} w={(parts[i + 1] ? parts[i + 1][0] : end) - x}>{oldStyle(text)}</Fit>
                ))}
              </Line>
            ))}
          </Article>
        </Page>
        <Sidebar>
          <SideItem $h={52}><Magnifier /></SideItem>
          <SideItem><Tag /></SideItem>
          <SideItem><Toolbox /></SideItem>
          <SideItem><Chess /></SideItem>
          <SideItem><M365 /></SideItem>
          <SideItem><Outlook /></SideItem>
          <SideItem><Send /></SideItem>
          <SideItem $h={58}><Plus n={15} /></SideItem>
          <Spacer />
          <SideRule />
          <SideItem><Panel /></SideItem>
          <SideItem><Gear /></SideItem>
        </Sidebar>
      </Middle>
      <Taskbar>
        <Weather>
          <Haze />
          <Stack $w={60} $align="flex-start" $ml={5}>
            <Fit w={30}>88°F</Fit>
            <Dim><Fit w={33}>Haze</Fit></Dim>
          </Stack>
        </Weather>
        <Slot $w={55}><Windows /></Slot>
        <SearchBox><SearchGlass /><Fit w={51}>Search</Fit></SearchBox>
        {apps.map(({ Icon, active, open }, i) => (
          <AppSlot key={i}>
            <AppTile $active={active}>
              <Icon />
              {active && <Indicator $w={20} $c="#0b78d4" />}
              {open && <Indicator $w={8} $c="#858180" />}
            </AppTile>
          </AppSlot>
        ))}
        <Tray>
          <Slot $w={42}><Chevron /></Slot>
          <Stack $w={54} $align="center"><Fit w={28}>ENG</Fit><Fit w={15}>IN</Fit></Stack>
          <Slot $w={40}><Wifi /></Slot>
          <Slot $w={20}><Volume /></Slot>
          <Slot $w={40}><Battery /></Slot>
          <Stack $w={88} $align="flex-end"><Fit w={36}>13:48</Fit><Fit w={77}>19-11-2023</Fit></Stack>
          <Slot $w={11} />
          <Slot $w={16}><Bell /></Slot>
        </Tray>
      </Taskbar>
    </Screen>
  );
}
